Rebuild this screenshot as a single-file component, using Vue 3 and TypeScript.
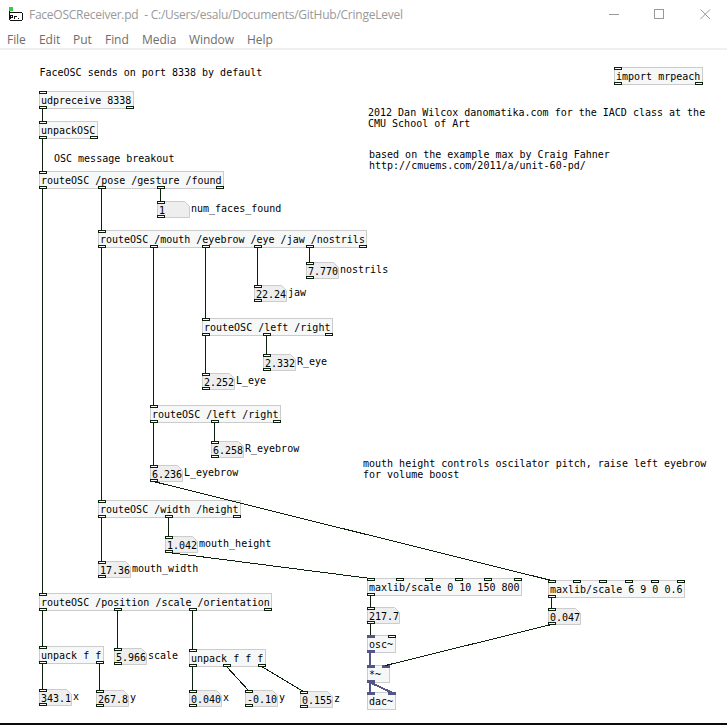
<script setup lang="ts">
interface Port { x: number; signal?: boolean }
interface PdObject { text: string; x: number; y: number; w: number; ins: Port[]; outs: Port[] }
interface NumberBox { value: string; x: number; y: number; label?: string }
interface Wire { from: [number, number]; to: [number, number]; signal?: boolean }
interface Note { text: string; x: number; y: number }

const menus: string[] = ['File', 'Edit', 'Put', 'Find', 'Media', 'Window', 'Help']

const ports = (...xs: number[]): Port[] => xs.map((x) => ({ x }))
const sig = (x: number): Port => ({ x, signal: true })

const objects: PdObject[] = [
  { text: 'import mrpeach', x: 614, y: 67, w: 89, ins: ports(614), outs: ports(614, 695) },
  { text: 'udpreceive 8338', x: 39, y: 91, w: 95, ins: ports(39), outs: ports(39, 126) },
  { text: 'unpackOSC', x: 39, y: 121, w: 59, ins: ports(39), outs: ports(39, 90) },
  { text: 'routeOSC /pose /gesture /found', x: 39, y: 171, w: 185, ins: ports(39), outs: ports(39, 98, 157, 216) },
  { text: 'routeOSC /mouth /eyebrow /eye /jaw /nostrils', x: 98, y: 230, w: 269, ins: ports(98), outs: ports(98, 150, 202, 254, 306, 359) },
  { text: 'routeOSC /left /right', x: 202, y: 318, w: 131, ins: ports(202), outs: ports(202, 263, 325) },
  { text: 'routeOSC /left /right', x: 150, y: 405, w: 131, ins: ports(150), outs: ports(150, 211, 273) },
  { text: 'routeOSC /width /height', x: 98, y: 500, w: 143, ins: ports(98), outs: ports(98, 165, 233) },
  { text: 'routeOSC /position /scale /orientation', x: 39, y: 593, w: 233, ins: ports(39), outs: ports(39, 114, 189, 264) },
  { text: 'unpack f f', x: 39, y: 646, w: 65, ins: ports(39), outs: ports(39, 96) },
  { text: 'unpack f f f', x: 189, y: 649, w: 77, ins: ports(189), outs: ports(189, 223, 258) },
  { text: 'maxlib/scale 0 10 150 800', x: 367, y: 578, w: 155, ins: ports(367, 396, 425, 455, 484, 514), outs: ports(367) },
  { text: 'maxlib/scale 6 9 0 0.6', x: 548, y: 580, w: 137, ins: ports(548, 573, 599, 625, 651, 677), outs: ports(548) },
  { text: 'osc~', x: 367, y: 635, w: 29, ins: [sig(367), { x: 388 }], outs: [sig(367)] },
  { text: '*~', x: 367, y: 665, w: 23, ins: [sig(367), sig(382)], outs: [sig(367)] },
  { text: 'dac~', x: 367, y: 692, w: 29, ins: [sig(367), sig(388)], outs: [] },
]

const numbers: NumberBox[] = [
  { value: '1', x: 157, y: 201, label: 'num_faces_found' },
  { value: '7.770', x: 306, y: 262, label: 'nostrils' },
  { value: '22.24', x: 254, y: 285, label: 'jaw' },
  { value: '2.332', x: 263, y: 354, label: 'R_eye' },
  { value: '2.252', x: 202, y: 373, label: 'L_eye' },
  { value: '6.258', x: 211, y: 441, label: 'R_eyebrow' },
  { value: '6.236', x: 150, y: 465, label: 'L_eyebrow' },
  { value: '1.042', x: 165, y: 536, label: 'mouth_height' },
  { value: '17.36', x: 98, y: 561, label: 'mouth_width' },
  { value: '5.966', x: 114, y: 648, label: 'scale' },
  { value: '343.1', x: 39, y: 689, label: 'x' },
  { value: '267.8', x: 96, y: 690, label: 'y' },
  { value: '0.040', x: 189, y: 690, label: 'x' },
  { value: '-0.10', x: 245, y: 690, label: 'y' },
  { value: '0.155', x: 300, y: 691, label: 'z' },
  { value: '217.7', x: 367, y: 607 },
  { value: '0.047', x: 548, y: 608 },
]

const notes: Note[] = [
  { text: 'FaceOSC sends on port 8338 by default', x: 39.5, y: 76 },
  { text: 'OSC message breakout', x: 54, y: 162 },
  { text: '2012 Dan Wilcox danomatika.com for the IACD class at the', x: 368, y: 116 },
  { text: 'CMU School of Art', x: 368, y: 127 },
  { text: 'based on the example max by Craig Fahner', x: 369, y: 158 },
  { text: 'http://cmuems.com/2011/a/unit-60-pd/', x: 369, y: 169 },
  { text: 'mouth height controls oscilator pitch, raise left eyebrow', x: 363, y: 467 },
  { text: 'for volume boost', x: 363, y: 478 },
]

const drop = (x: number, y1: number, y2: number): Wire => ({ from: [x + 3.5, y1], to: [x + 3.5, y2] })

const wires: Wire[] = [
  drop(39, 109, 121), drop(39, 139, 171), drop(39, 189, 593), drop(98, 189, 230),
  drop(157, 189, 201), drop(98, 248, 500), drop(150, 248, 405), drop(202, 248, 318),
  drop(254, 248, 285), drop(306, 248, 262), drop(202, 336, 373), drop(263, 336, 354),
  drop(150, 423, 465), drop(211, 423, 441), drop(98, 518, 561), drop(165, 518, 536),
  drop(39, 611, 646), drop(114, 611, 648), drop(189, 611, 649), drop(39, 664, 689),
  drop(96, 664, 690), drop(189, 667, 690), drop(367, 596, 607), drop(367, 624, 635),
  drop(548, 598, 608),
  { from: [153.5, 481.5], to: [551.5, 580.5] },
  { from: [168.5, 552.5], to: [370.5, 578.5] },
  { from: [551.5, 624.5], to: [385.5, 665.5] },
  { from: [226.5, 666.5], to: [248.5, 690.5] },
  { from: [261.5, 666.5], to: [303.5, 691.5] },
  { from: [370, 653], to: [370, 665], signal: true },
  { from: [370, 683], to: [370, 692], signal: true },
  { from: [370.5, 682.5], to: [391.5, 692.5], signal: true },
]

const numberOutline = (n: NumberBox): string =>
  `M${n.x + 0.5} ${n.y + 0.5}h27l5 5v11h-32z`
</script>

<template>
  <div class="window">
    <header class="titlebar">
      <svg class="logo" width="15" height="15" viewBox="0 0 15 15" shape-rendering="crispEdges">
        <rect x="1" y="0" width="4" height="4" fill="#3fc94b" />
        <path d="M1 5.500h13M14.500 6v7M2 13.500h12M1.500 4v9" fill="none" stroke="#111" />
        <path d="M2 8.500h3M2.500 8v4M4.500 8v2M3 10.500h2M6.500 9v3M7 9.500h2M10 11.500h1" fill="none" stroke="#111" />
      </svg>
      <span class="title">FaceOSCReceiver.pd&nbsp; - C:/Users/esalu/Documents/GitHub/CringeLevel</span>
      <svg class="controls" width="104" height="11" viewBox="0 0 104 11">
        <path d="M1 5.500h10" />
        <rect x="46.500" y="0.500" width="9" height="9" />
        <path d="M92.500 0.500l9.500 9.500M102 0.500l-9.500 9.500" />
      </svg>
    </header>
    <nav class="menubar">
      <span v-for="m in menus" :key="m">{{ m }}</span>
    </nav>
    <main class="patch">
      <svg width="727" height="673" viewBox="0 50 727 673">
        <g v-for="(o, i) in objects" :key="'o' + i">
          <rect class="box" :x="o.x + 0.5" :y="o.y + 0.5" :width="o.w - 1" height="17" />
          <rect
            v-for="p in o.ins" :key="'i' + p.x" class="port" :class="{ signal: p.signal }"
            :x="p.x + 0.5" :y="o.y + 0.5" width="7" height="2"
          />
          <rect
            v-for="p in o.outs" :key="'u' + p.x" class="port" :class="{ signal: p.signal }"
            :x="p.x + 0.5" :y="o.y + 15.5" width="7" height="2"
          />
          <text :x="o.x + 2" :y="o.y + 13">{{ o.text }}</text>
        </g>
        <g v-for="(n, i) in numbers" :key="'n' + i">
          <path class="number" :d="numberOutline(n)" />
          <rect class="port" :x="n.x + 0.5" :y="n.y + 0.5" width="7" height="2" />
          <rect class="port" :x="n.x + 0.5" :y="n.y + 14.5" width="7" height="2" />
          <text :x="n.x + 2" :y="n.y + 13">{{ n.value }}</text>
          <text v-if="n.label" :x="n.x + 34" :y="n.y + 11">{{ n.label }}</text>
        </g>
        <text v-for="t in notes" :key="t.text" :x="t.x" :y="t.y">{{ t.text }}</text>
        <line
          v-for="(w, i) in wires" :key="'w' + i" class="wire" :class="{ signal: w.signal }"
          :x1="w.from[0]" :y1="w.from[1]" :x2="w.to[0]" :y2="w.to[1]"
        />
      </svg>
    </main>
  </div>
</template>

<style>
body {
  margin: 0;
  overflow: hidden;
}
</style>

<style scoped>
.window {
  box-sizing: border-box;
  width: 727px;
  height: 725px;
  display: flex;
  flex-direction: column;
  background: #fff;
  border-bottom: 2px solid #0b0b0d;
  font-family: "Open Sans", "Noto Sans", sans-serif;
  font-size: 12px;
}
.titlebar {
  display: flex;
  align-items: center;
  height: 29px;
  padding: 0 15px 0 8px;
  color: #999;
}
.logo {
  margin-right: 6px;
}
.title {
  flex: 1;
  white-space: nowrap;
  letter-spacing: -0.25px;
}
.controls {
  fill: none;
  stroke: #999;
  stroke-width: 1;
}
.menubar {
  box-sizing: border-box;
  display: grid;
  grid-template-columns: 32px 34px 32px 37px 47px 58px 40px;
  align-items: center;
  height: 21px;
  padding: 2px 0 0 7px;
  color: #6d6d6d;
  letter-spacing: -0.05px;
  border-bottom: 2px solid #f0f0f0;
}
.patch svg {
  display: block;
}
.patch text {
  font-family: "DejaVu Sans Mono", monospace;
  font-size: 10px;
  fill: #000;
  white-space: pre;
}
.box {
  fill: #f6f8f8;
  stroke: #ccc;
}
.number {
  fill: #eee;
  stroke: #ccc;
}
.port {
  fill: #fff;
  stroke: #0d1f0d;
}
.port.signal {
  fill: #555588;
  stroke: #555588;
}
.wire {
  stroke: #0d1f0d;
  stroke-width: 1;
  shape-rendering: crispEdges;
}
.wire.signal {
  stroke: #555588;
  stroke-width: 2;
}
</style>
